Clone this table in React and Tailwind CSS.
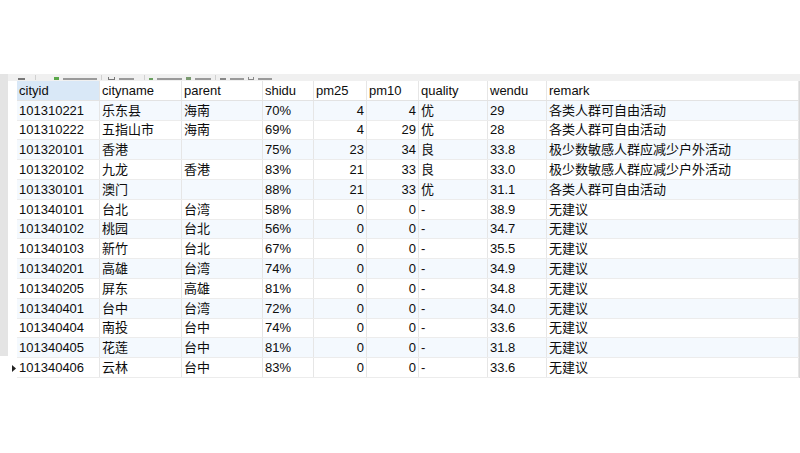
import React from "react";

const cols = [
  { key: "cityid", w: 83, align: "left" },
  { key: "cityname", w: 82, align: "left" },
  { key: "parent", w: 81, align: "left" },
  { key: "shidu", w: 51, align: "left" },
  { key: "pm25", w: 53, align: "right" },
  { key: "pm10", w: 52, align: "right" },
  { key: "quality", w: 69, align: "left" },
  { key: "wendu", w: 59, align: "left" },
  { key: "remark", w: 252, align: "left" },
];

const rows = [
  ["101310221", "乐东县", "海南", "70%", "4", "4", "优", "29", "各类人群可自由活动"],
  ["101310222", "五指山市", "海南", "69%", "4", "29", "优", "28", "各类人群可自由活动"],
  ["101320101", "香港", "", "75%", "23", "34", "良", "33.8", "极少数敏感人群应减少户外活动"],
  ["101320102", "九龙", "香港", "83%", "21", "33", "良", "33.0", "极少数敏感人群应减少户外活动"],
  ["101330101", "澳门", "", "88%", "21", "33", "优", "31.1", "各类人群可自由活动"],
  ["101340101", "台北", "台湾", "58%", "0", "0", "-", "38.9", "无建议"],
  ["101340102", "桃园", "台北", "56%", "0", "0", "-", "34.7", "无建议"],
  ["101340103", "新竹", "台北", "67%", "0", "0", "-", "35.5", "无建议"],
  ["101340201", "高雄", "台湾", "74%", "0", "0", "-", "34.9", "无建议"],
  ["101340205", "屏东", "高雄", "81%", "0", "0", "-", "34.8", "无建议"],
  ["101340401", "台中", "台湾", "72%", "0", "0", "-", "34.0", "无建议"],
  ["101340404", "南投", "台中", "74%", "0", "0", "-", "33.6", "无建议"],
  ["101340405", "花莲", "台中", "81%", "0", "0", "-", "31.8", "无建议"],
  ["101340406", "云林", "台中", "83%", "0", "0", "-", "33.6", "无建议"],
];

function Cell({ w, align, children, className = "" }) {
  return (
    <div
      style={{ width: w }}
      className={
        "shrink-0 h-full flex items-center border-r border-[#e6e6e6] px-[2px] overflow-hidden whitespace-nowrap " +
        (align === "right" ? "justify-end " : "justify-start ") +
        className
      }
    >
      {children}
    </div>
  );
}

function Toolbar() {
  return (
    <div className="h-[7px] bg-[#f0f0f0] overflow-hidden flex items-end pb-[1px] pl-[10px] gap-[4px]">
      <div className="w-[7px] h-[2px] bg-[#777]" />
      <div className="w-px h-[5px] bg-[#d0d0d0] ml-[6px]" />
      <div className="w-[5px] h-[3px] bg-[#5aa84a] ml-[14px]" />
      <div className="w-[34px] h-[2px] bg-[#9a9a9a]" />
      <div className="w-px h-[5px] bg-[#d0d0d0]" />
      <div className="w-[7px] h-[3px] border border-[#777] border-t-0 ml-[2px]" />
      <div className="w-[15px] h-[2px] bg-[#9a9a9a]" />
      <div className="w-px h-[5px] bg-[#d0d0d0] ml-[6px]" />
      <div className="w-[4px] h-[2px] bg-[#6aa060]" />
      <div className="w-[25px] h-[2px] bg-[#9a9a9a]" />
      <div className="w-[5px] h-[3px] bg-[#7a9a70]" />
      <div className="w-[16px] h-[2px] bg-[#9a9a9a]" />
      <div className="w-px h-[5px] bg-[#d0d0d0]" />
      <div className="w-[6px] h-[2px] bg-[#888]" />
      <div className="w-[14px] h-[2px] bg-[#9a9a9a]" />
      <div className="w-[6px] h-[3px] border border-[#888] border-t-0" />
      <div className="w-[14px] h-[2px] bg-[#9a9a9a]" />
    </div>
  );
}

export default function App() {
  return (
    <div
      className="w-[800px] h-[453px] bg-white overflow-hidden text-[13px] text-[#0d0d0d] leading-none pt-[74px]"
      style={{ fontFamily: '"Liberation Sans", "Noto Sans CJK SC", sans-serif' }}
    >
      <div className="flex">
        <div className="w-[8px] h-[282px] bg-[#e4e4e4] shrink-0" />
        <div className="flex-1 flex flex-col">
          <Toolbar />
          <div className="flex">
            <div className="w-[9px] shrink-0 flex flex-col">
              <div className="h-[19.8px]" />
              {rows.map((r, i) => (
                <div key={i} className="h-[19.8px] flex items-center justify-end pr-[1px]">
                  {i === rows.length - 1 && (
                    <svg width="4" height="7" viewBox="0 0 4 7">
                      <path d="M0 0 L4 3.5 L0 7 Z" fill="#222" />
                    </svg>
                  )}
                </div>
              ))}
            </div>
            <div className="flex flex-col border-r border-[#d8d8d8]">
              <div className="flex h-[19.8px] border-b border-[#e3e3e3] bg-white">
                {cols.map((c, j) => (
                  <Cell key={c.key} w={c.w} align="left" className={j === 0 ? "bg-[#d9e8f7]" : ""}>
                    {c.key}
                  </Cell>
                ))}
              </div>
              {rows.map((r, i) => (
                <div
                  key={i}
                  className={
                    "flex h-[19.8px] border-b border-[#ececec] " + (i % 2 === 0 ? "bg-[#f4f9fe]" : "bg-white")
                  }
                >
                  {cols.map((c, j) => (
                    <Cell key={c.key} w={c.w} align={c.align}>
                      {r[j]}
                    </Cell>
                  ))}
                </div>
              ))}
            </div>
          </div>
        </div>
      </div>
    </div>
  );
}
